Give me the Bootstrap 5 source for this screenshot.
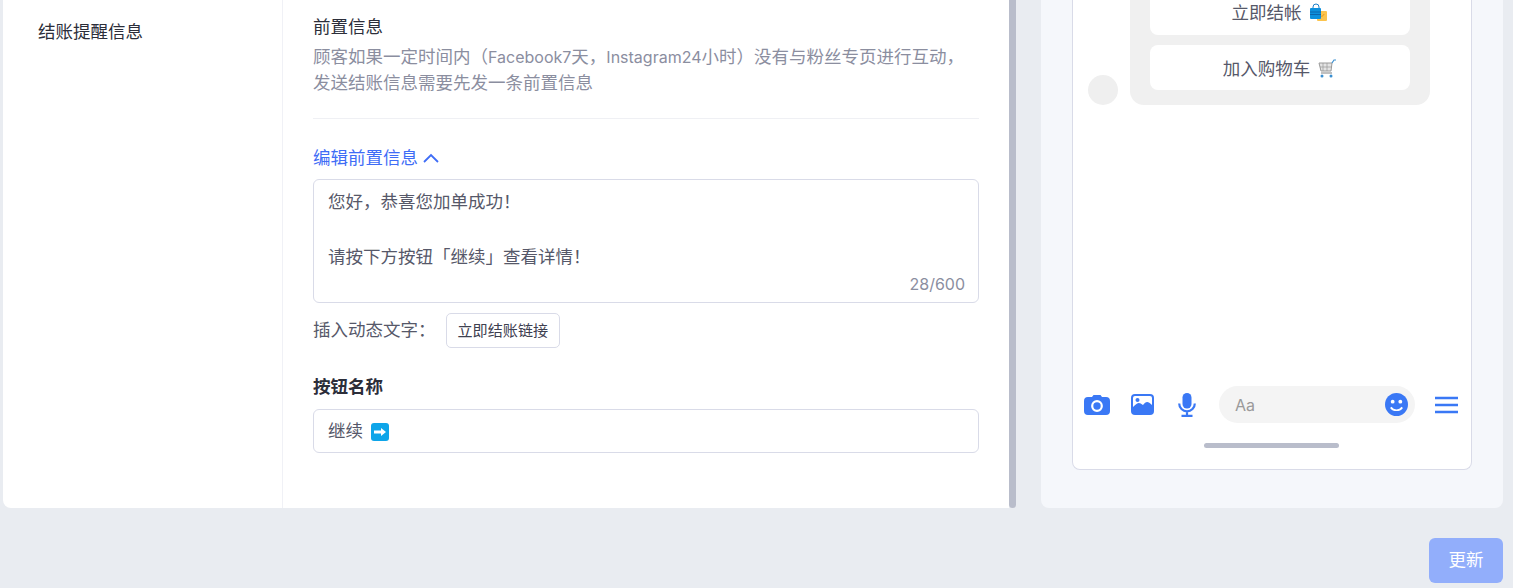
<!DOCTYPE html>
<html lang="zh-CN">
<head>
<meta charset="utf-8">
<title>结账提醒信息</title>
<link rel="stylesheet" href="https://cdn.jsdelivr.net/npm/bootstrap@5.3.0/dist/css/bootstrap.min.css">
<style>
html,body{height:100%;overflow:hidden}
body{background:#e9ecf1;font-family:Inter,"Noto Sans CJK SC",sans-serif;font-size:17.5px;color:#212529}
.latin-run{font-size:16px}
.top-area{height:508px;padding:0 10px 0 3px}
.editor-card{width:1006px;background:#fff;border-radius:0 0 0 8px}
.side-col{width:280px;border-right:1px solid #f0f1f6;padding:21px 0 0 35px;line-height:22px;color:#2c2e3a}
.form-col{padding:16px 30px 0 30px}
.scroll-thumb{width:7px;background:#b9bdcb;border-radius:0 0 4px 4px}
.pre-title{line-height:22px;color:#2c2e3a;margin-bottom:6px}
.pre-desc{line-height:25px;color:#8b8e9f;padding-bottom:23px;border-bottom:1px solid #eff0f4;margin-bottom:27px}
.toggle-link{color:#3f6df6;line-height:24px;margin-bottom:9px;text-decoration:none}
.msg-box{height:124px}
.msg-area.form-control{height:124px;resize:none;border:1px solid #d9dbe8;border-radius:6px;padding:8px 14px;line-height:27.5px;color:#565869;font-size:17.5px;font-family:inherit;box-shadow:none}
.msg-count{position:absolute;right:14px;bottom:8px;color:#8b8e9f;line-height:22px;font-size:16px}
.dyn-row{margin-top:10px;color:#565869;height:35px}
.dyn-btn.btn{margin-left:10px;font-size:15.1px;padding:0 11px;height:35px;line-height:33px;border:1px solid #d9dbe8;border-radius:5px;color:#3e4050;background:#fff}
.name-label{font-weight:700;margin-top:28px;line-height:22px;margin-bottom:11px;color:#2c2e3a}
.name-input{height:44px;border:1px solid #d9dbe8;border-radius:6px;padding:1px 14px 0;color:#565869;background:#fff}
.preview-panel{margin-left:25px;width:462px;background:#f5f7fb;border-radius:0 0 8px 8px;padding:0 31px 38px}
.phone-frame{height:470px;background:#fff;border:1px solid #d9dbe8;border-top:0;border-radius:0 0 8px 8px}
.chat-row{padding-left:15px}
.chat-avatar{width:30px;height:30px;border-radius:50%;background:#efefef;margin-right:12px}
.chat-bubble{width:300px;height:105px;background:#f0f0f0;border-radius:0 0 14px 14px;padding:0 20px}
.chat-choice{background:#fff;text-align:center;color:#565869;border-radius:8px;height:45px;line-height:48px;margin-bottom:10px}
.chat-choice:first-child{height:35px;line-height:26px;border-radius:0 0 8px 8px}
.chat-choice svg{vertical-align:-3px;margin-left:3px}
.chat-gap{height:282px}
.tool-bar{padding-left:11px;height:37px}
.tool-photo{margin-left:21px}
.tool-mic{margin-left:24px}
.tool-pill{margin-left:23px;width:196px;height:37px;border-radius:19px;background:#f4f4f4;padding:0 7px 0 16px;color:#9a9a9a}
.tool-pill span{font-size:16px}
.tool-menu{margin-left:20px}
.home-bar{width:135px;height:5px;background:#b9bdcb;border-radius:3px;margin:20px 0 21px 131px}
.footer-area{padding:30px 10px 0 0}
.save-btn.btn{width:74px;height:45px;background:#92aefb;border:0;border-radius:6px;color:#fff;font-size:17.5px;padding:0}
</style>
</head>
<body>
<div class="top-area d-flex">
  <div class="editor-card d-flex">
    <div class="side-col flex-shrink-0">结账提醒信息</div>
    <div class="form-col flex-grow-1">
      <div class="pre-title">前置信息</div>
      <div class="pre-desc">顾客如果一定时间内（<span class="latin-run">Facebook7</span>天，<span class="latin-run">Instagram24</span>小时）没有与粉丝专页进行互动，<br>发送结账信息需要先发一条前置信息</div>
      <a class="toggle-link d-flex align-items-center" href="#">编辑前置信息
        <svg class="ms-1" width="18" height="12" viewBox="0 0 18 12"><path d="M2 10 9 3l7 7" fill="none" stroke="#3f6df6" stroke-width="1.8"/></svg>
      </a>
      <div class="msg-box position-relative">
        <textarea class="msg-area form-control">您好，恭喜您加单成功！

请按下方按钮「继续」查看详情！</textarea>
        <span class="msg-count">28/600</span>
      </div>
      <div class="dyn-row d-flex align-items-center">
        <span>插入动态文字：</span>
        <button type="button" class="dyn-btn btn">立即结账链接</button>
      </div>
      <div class="name-label">按钮名称</div>
      <div class="name-input d-flex align-items-center">继续
        <svg class="ms-2" width="18" height="18" viewBox="0 0 18 18"><rect width="18" height="18" rx="3" fill="#0ea5e9"/><path d="M3 7.600h7V5l5 4-5 4v-2.600H3z" fill="#fff"/></svg>
      </div>
    </div>
  </div>
  <div class="scroll-thumb flex-shrink-0"></div>
  <div class="preview-panel flex-shrink-0">
    <div class="phone-frame d-flex flex-column">
      <div class="chat-row d-flex align-items-end align-self-start">
        <div class="chat-avatar flex-shrink-0"></div>
        <div class="chat-bubble">
          <div class="chat-choice">立即结帐
            <svg width="19" height="19" viewBox="0 0 19 19"><rect x="8" y="8" width="10" height="10" rx="1" fill="#fcc44d"/><path d="M11 11c0 3 3 3 4 0" fill="none" stroke="#e79a1e"/><path d="M4 6V4a3 3 0 0 1 6 0v2" fill="none" stroke="#1d80c9"/><rect x="1" y="5" width="11" height="11" rx="1" fill="#0b90dd"/><path d="M1 9h11M1 11.500h11" stroke="#0a66ad"/></svg>
          </div>
          <div class="chat-choice">加入购物车
            <svg width="19" height="19" viewBox="0 0 19 19"><path d="M1 4h13l-1 8H3z" fill="#e4e4e4" stroke="#9a9a9a"/><path d="M5 4v8M9 4v8M2 8h12" stroke="#9a9a9a" stroke-width=".7"/><path d="M14 4l2-3h2" fill="none" stroke="#3a8fd0" stroke-width="1.2"/><path d="M3 14h11" stroke="#a5a5a5" stroke-width="1.4"/><circle cx="4" cy="17" r="1.500" fill="#3a8fd0"/><circle cx="13" cy="17" r="1.500" fill="#3a8fd0"/></svg>
          </div>
        </div>
      </div>
      <div class="chat-gap"></div>
      <div class="tool-bar d-flex align-items-center">
        <svg width="26" height="20" viewBox="0 0 26 20"><path d="M4 2h4l1.500-2h7L18 2h4a4 4 0 0 1 4 4v10a4 4 0 0 1-4 4H4a4 4 0 0 1-4-4V6a4 4 0 0 1 4-4z" fill="#3a78f5"/><circle cx="13" cy="11" r="4.800" fill="none" stroke="#fff" stroke-width="2.200"/></svg>
        <svg class="tool-photo" width="23" height="21" viewBox="0 0 23 21"><rect width="23" height="21" rx="4" fill="#3a78f5"/><rect x="2" y="2" width="19" height="14" rx="2" fill="#fff"/><circle cx="6.500" cy="6" r="2" fill="#3a78f5"/><path d="M2 13c5-5 6-5 10-2 3-4 5-4 9 0v7H2z" fill="#3a78f5"/></svg>
        <svg class="tool-mic" width="18" height="24" viewBox="0 0 18 24"><rect x="4.500" y="0" width="9" height="15.500" rx="4.500" fill="#3a78f5"/><path d="M1.200 10.500a7.800 7.800 0 0 0 15.600 0M9 18.500v4M3.500 22.800h11" fill="none" stroke="#3a78f5" stroke-width="2.200"/></svg>
        <div class="tool-pill d-flex align-items-center justify-content-between">
          <span>Aa</span>
          <svg width="23" height="23" viewBox="0 0 24 24"><circle cx="12" cy="12" r="12" fill="#3a78f5"/><circle cx="8" cy="9" r="2" fill="#fff"/><circle cx="16" cy="9" r="2" fill="#fff"/><path d="M6 15c3 4 9 4 12 0" fill="none" stroke="#fff" stroke-width="1.800"/></svg>
        </div>
        <svg class="tool-menu" width="23" height="18" viewBox="0 0 23 18"><path d="M0 2h23M0 9h23M0 16h23" stroke="#3a78f5" stroke-width="2.600"/></svg>
      </div>
      <div class="home-bar"></div>
    </div>
  </div>
</div>
<div class="footer-area d-flex justify-content-end">
  <button type="button" class="save-btn btn">更新</button>
</div>
</body>
</html>
